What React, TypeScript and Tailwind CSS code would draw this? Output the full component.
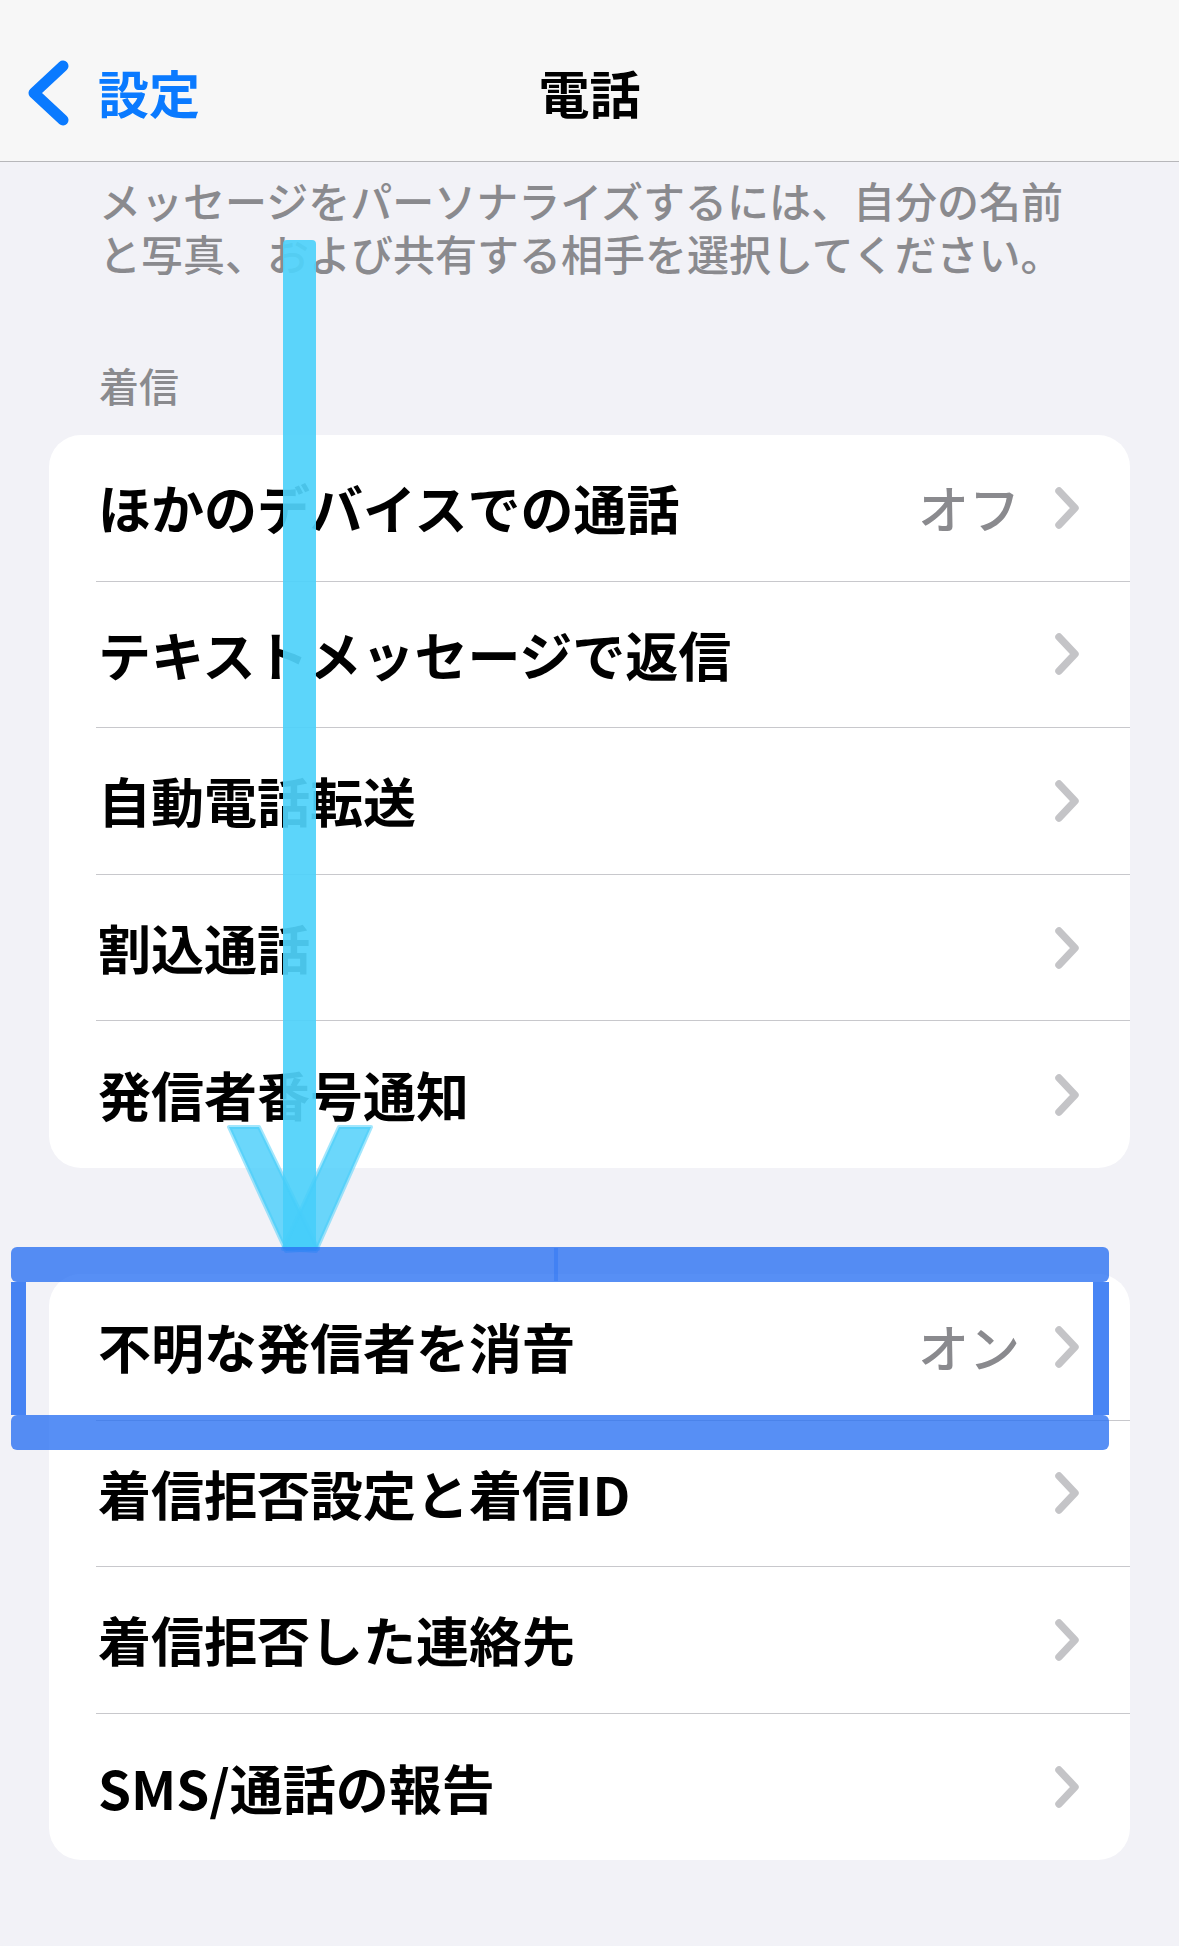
import React from "react";

type Row = { label: string; value?: string };

const group1: Row[] = [
  { label: "ほかのデバイスでの通話", value: "オフ" },
  { label: "テキストメッセージで返信" },
  { label: "自動電話転送" },
  { label: "割込通話" },
  { label: "発信者番号通知" },
];

const group2: Row[] = [
  { label: "不明な発信者を消音", value: "オン" },
  { label: "着信拒否設定と着信ID" },
  { label: "着信拒否した連絡先" },
  { label: "SMS/通話の報告" },
];

function Chevron() {
  return (
    <svg width="30" height="46" viewBox="0 0 30 46" className="shrink-0">
      <path
        d="M7 6 L23 23 L7 40"
        fill="none"
        stroke="#c4c4c7"
        strokeWidth="7.5"
        strokeLinecap="round"
        strokeLinejoin="round"
      />
    </svg>
  );
}

function Card({ rows }: { rows: Row[] }) {
  return (
    <div className="mx-[49px] bg-white rounded-[32px] overflow-hidden">
      {rows.map((r, i) => (
        <div key={r.label} className="h-[146.6px] flex pl-[47px]">
          <div
            className={
              "flex-1 flex items-center pr-[48px] " +
              (i < rows.length - 1 ? "border-b border-[#c8c8cc]" : "")
            }
          >
            <span className="pl-[2px] text-[53px] leading-none font-semibold text-black">
              {r.label}
            </span>
            <div className="ml-auto flex items-center">
              {r.value && (
                <span className="mr-[32px] text-[51px] leading-none text-[#8a8a8e] font-medium">
                  {r.value}
                </span>
              )}
              <Chevron />
            </div>
          </div>
        </div>
      ))}
    </div>
  );
}

export default function App() {
  return (
    <div className="relative w-[1179px] h-[1946px] overflow-hidden bg-[#f2f2f7] font-['Noto_Sans_CJK_JP','Noto_Sans',sans-serif]">
      {/* Navigation bar */}
      <div className="h-[162px] bg-[#f7f7f7] border-b border-[#b7b7ba] grid grid-cols-[1fr_auto_1fr] items-center pt-[24px]">
        <div className="flex items-center pl-[26px]">
          <svg width="44" height="68" viewBox="0 0 44 68">
            <path
              d="M37 7 L8 34 L37 61"
              fill="none"
              stroke="#0a7aff"
              strokeWidth="11"
              strokeLinecap="round"
              strokeLinejoin="round"
            />
          </svg>
          <span className="ml-[28px] text-[51px] leading-none font-semibold text-[#0a7aff]">
            設定
          </span>
        </div>
        <div className="text-[51px] leading-none font-bold text-black">電話</div>
        <div />
      </div>

      {/* Description */}
      <p className="pt-[11px] pl-[99px] text-[42px] leading-[53px] font-medium text-[#8a8a8e]">
        メッセージをパーソナライズするには、自分の名前
        <br />
        と写真、および共有する相手を選択してください。
      </p>

      {/* Section header */}
      <div className="mt-[82px] pl-[99px] text-[40px] leading-[48px] font-medium text-[#8a8a8e]">
        着信
      </div>

      <div className="mt-[26px]">
        <Card rows={group1} />
      </div>

      <div className="mt-[106px]">
        <Card rows={group2} />
      </div>

      {/* Annotation: cyan arrow */}
      <svg
        className="absolute left-0 top-0 pointer-events-none"
        width="1179"
        height="1946"
        viewBox="0 0 1179 1946"
      >
        <rect x="283" y="240" width="33" height="1010" rx="4" fill="rgb(80,210,250)" fillOpacity="0.93" />
        <path
          d="M229 1127 L259 1127 L318 1249 L286 1251 Z"
          fill="rgb(70,205,250)"
          fillOpacity="0.8"
          stroke="rgb(70,205,250)"
          strokeOpacity="0.5"
          strokeWidth="4"
          strokeLinejoin="round"
        />
        <path
          d="M339 1127 L371 1127 L316 1251 L283 1249 Z"
          fill="rgb(70,205,250)"
          fillOpacity="0.8"
          stroke="rgb(70,205,250)"
          strokeOpacity="0.5"
          strokeWidth="4"
          strokeLinejoin="round"
        />
      </svg>

      {/* Annotation: blue highlight box */}
      <svg
        className="absolute left-0 top-0 pointer-events-none"
        width="1179"
        height="1946"
        viewBox="0 0 1179 1946"
      >
        <rect x="11" y="1247" width="1098" height="35" rx="6" fill="rgb(40,112,242)" fillOpacity="0.78" />
        <rect x="11" y="1415" width="1098" height="35" rx="6" fill="rgb(40,112,242)" fillOpacity="0.78" />
        <rect x="11" y="1282" width="15" height="133" fill="rgb(40,112,242)" fillOpacity="0.85" />
        <rect x="1093" y="1282" width="16" height="133" fill="rgb(40,112,242)" fillOpacity="0.85" />
        <rect x="554" y="1248" width="4" height="33" fill="rgb(40,112,242)" fillOpacity="0.4" />
      </svg>
    </div>
  );
}
